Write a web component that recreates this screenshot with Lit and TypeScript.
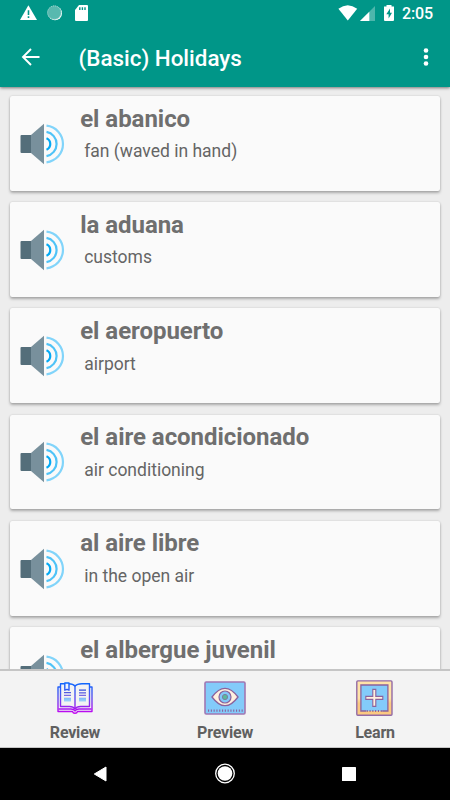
import { LitElement, html, css, nothing } from "lit";
import { customElement, property } from "lit/decorators.js";

const words: [string, string][] = [
  ["el abanico", "fan (waved in hand)"],
  ["la aduana", "customs"],
  ["el aeropuerto", "airport"],
  ["el aire acondicionado", "air conditioning"],
  ["al aire libre", "in the open air"],
  ["el albergue juvenil", ""],
];

@customElement("word-card")
class WordCard extends LitElement {
  @property() term = "";
  @property() meaning = "";

  static styles = css`
    :host {
      display: flex;
      align-items: center;
      box-sizing: border-box;
      height: 94.8px;
      flex: none;
      background: #fafafa;
      border-radius: 2px;
      box-shadow: 0 2px 3px rgba(0, 0, 0, 0.28), 0 0 2px rgba(0, 0, 0, 0.16);
    }
    .speaker { width: 46px; height: 42px; margin: 1px 0 0 9.7px; flex: none; }
    .words { align-self: flex-start; margin-left: 14.5px; padding-top: 7.6px; white-space: nowrap; }
    .term { font-size: 24px; line-height: 31px; font-weight: 700; color: #6f6f6f; letter-spacing: -0.04px; }
    .meaning { font-size: 17.5px; line-height: 22px; color: #656565; margin: 5.6px 0 0 4px; }
  `;

  render() {
    return html`
      <svg class="speaker" viewBox="0 0 46 42">
        <rect x=".5" y="12" width="13" height="18" rx="1" fill="#546e7a" />
        <path d="M11 12L24 .8V41.2L11 30Z" fill="#78909c" />
        <g fill="none" stroke-width="2.2">
          <path d="M26.5 15.3a6.2 6.2 0 0 1 0 11.4" stroke="#03a9f4" />
          <path d="M26.5 8.9a12.3 12.3 0 0 1 0 24.2" stroke="#4fc3f7" />
          <path d="M26.5 2.7a18.4 18.4 0 0 1 0 36.6" stroke="#81d4fa" />
        </g>
      </svg>
      <div class="words">
        <div class="term">${this.term}</div>
        ${this.meaning ? html`<div class="meaning">${this.meaning}</div>` : nothing}
      </div>
    `;
  }
}

const bookIcon = html`
  <svg class="icon" viewBox="0 0 38 38">
    <defs>
      <linearGradient id="ink" gradientUnits="userSpaceOnUse" x1="0" y1="3" x2="0" y2="35">
        <stop offset="0" stop-color="#0868ff" />
        <stop offset=".45" stop-color="#5553ee" />
        <stop offset="1" stop-color="#c800f0" />
      </linearGradient>
      <linearGradient id="lines" gradientUnits="userSpaceOnUse" x1="0" y1="10" x2="0" y2="23">
        <stop offset="0" stop-color="#2348d8" />
        <stop offset=".6" stop-color="#8a70e8" />
        <stop offset=".7" stop-color="#80bdf8" />
        <stop offset="1" stop-color="#a5d5fa" />
      </linearGradient>
    </defs>
    <g fill="none" stroke="url(#ink)" stroke-width="1.4" stroke-linejoin="round">
      <path d="M19 7C17 4.5 14 4.7 12 4.7H4.5V27.5H13.5C16 27.5 18 28.5 19 30C20 28.5 22 27.5 24.5 27.5H33.5V4.7H26C22 4.7 20.5 5.3 19 7Z" />
      <path d="M19 7V30M4.5 8H2V32.5H16.5Q17 34.2 19 34.2T21.5 32.5H36V8H33.5" />
      <path d="M2.5 30H15Q18 30 19 32Q20 30 23 30H35.5" />
      <path d="M8.8 4H13V11.2L11 10.3L8.8 11.2Z" fill="#eef4ff" />
    </g>
    <path d="M8 13H15V14.2H8ZM8 15.7H15V17H8ZM8 18.8H15V22.5H8ZM23 10.5H30V11.7H23ZM23 13.2H30V14.4H23ZM23 15.8H30V17H23ZM23 18.8H30V22.5H23Z" fill="url(#lines)" />
  </svg>
`;

const eyeIcon = html`
  <svg class="icon eye" viewBox="0 0 42 38">
    <rect x="1" y="3" width="40" height="32" rx="1.2" fill="#83cbfa" stroke="#a177b2" stroke-width="1.6" />
    <path d="M8 18Q14.5 9.3 21 9.3T34 18Q27.5 26.7 21 26.7T8 18Z" fill="#fff0df" stroke="#8b629c" stroke-width="1.3" />
    <circle cx="21" cy="18" r="6" fill="#83c8f8" stroke="#8b629c" stroke-width="1.2" />
    <circle cx="21" cy="18" r="2.6" fill="#5bb99a" stroke="#7e7ca2" stroke-width="1" />
    <path d="M4 31.7H39" stroke="#8b629c" stroke-width="2.2" stroke-dasharray="1.1 1.7" />
  </svg>
`;

const plusIcon = html`
  <svg class="icon" viewBox="0.8 0 38 38">
    <defs>
      <linearGradient id="frame" x1="0" y1="0" x2="0" y2="1">
        <stop offset=".5" stop-color="#ffe3a8" />
        <stop offset=".65" stop-color="#fbc981" />
      </linearGradient>
    </defs>
    <rect x="1.6" y="1.9" width="35.2" height="34.4" rx="1" fill="url(#frame)" stroke="#936aa5" stroke-width="1.4" />
    <rect x="5.7" y="6" width="27" height="26" fill="#83cbfa" />
    <path d="M11 32H5.7V6H32.7V32H27" fill="none" stroke="#8b629c" stroke-width="1.3" />
    <path d="M11.5 32H28" stroke="#8b629c" stroke-width="2.2" stroke-dasharray="1.1 1.7" />
    <path d="M17.6 10.4H20.6V17.4H27.6V20.4H20.6V27.4H17.6V20.4H10.6V17.4H17.6Z" fill="#fff0df" stroke="#8b629c" stroke-width="1.1" />
  </svg>
`;

@customElement("app-root")
class AppRoot extends LitElement {
  static styles = css`
    :host {
      display: flex;
      flex-direction: column;
      width: 450px;
      height: 800px;
      overflow: hidden;
      background: #ededed;
      font-family: Roboto, sans-serif;
    }
    svg { display: block; }
    header {
      flex: none;
      height: 87px;
      background: #009688;
      color: #fff;
      box-shadow: 0 1px 3px rgba(0, 0, 0, 0.5);
      z-index: 1;
    }
    .status { display: flex; align-items: center; height: 28px; padding: 0 17px 0 20px; }
    .left { width: 70px; height: 28px; }
    .right { width: 66px; height: 28px; margin-left: auto; }
    .clock { width: 31px; font-size: 16px; line-height: 20px; margin: -1px 0 0 1px; font-weight: 500; letter-spacing: -0.15px; white-space: nowrap; }
    .bar { display: flex; align-items: center; height: 59px; padding: 0 16px 0 20px; }
    .arrow { width: 22px; height: 59px; }
    .more { width: 16px; height: 59px; }
    h1 { margin: 0 0 0 36.5px; flex: 1; font-size: 22.4px; font-weight: 500; line-height: 30px; white-space: nowrap; }
    main {
      flex: 1;
      min-height: 0;
      overflow: hidden;
      display: flex;
      flex-direction: column;
      gap: 11.4px;
      padding: 9px 10px 0;
    }
    .tabs {
      flex: none;
      height: 79.5px;
      box-sizing: border-box;
      display: grid;
      grid-template-columns: repeat(3, 1fr);
      justify-items: center;
      border-top: 2px solid #c5c5c5;
      border-bottom: 1px solid #c5c5c5;
      background: #f3f3f3;
    }
    .tab { display: flex; flex-direction: column; align-items: center; padding-top: 8.5px; }
    .icon { width: 38px; height: 38px; }
    .eye { width: 42px; }
    .label { font-size: 16px; line-height: 20px; font-weight: 700; color: #606060; margin-top: 5.5px; letter-spacing: -0.2px; }
    .system { flex: none; height: 52px; background: #000; }
  `;

  render() {
    return html`
      <header>
        <div class="status">
          <svg class="left" viewBox="0 0 70 28">
            <path d="M8.4 5.2L17 20H0Z" fill="#fff" />
            <path d="M8.5 10.2V15M8.5 16.2V18" stroke="#009688" stroke-width="1.6" />
            <circle cx="35" cy="13.3" r="7" fill="#fff" />
            <circle cx="34.3" cy="12.6" r="7" fill="#58b9af" />
            <circle cx="34.3" cy="12.6" r="6.7" fill="none" stroke="#a6dad5" stroke-dasharray="1 1" />
            <path d="M59 5H67Q68 5 68 6V20Q68 21 67 21H56Q55 21 55 20V10Z" fill="#fff" />
            <path d="M59.8 7.2V10M62.4 7.2V10M65 7.2V10" stroke="#009688" stroke-width="1.4" />
          </svg>
          <svg class="right" viewBox="335 0 66 28">
            <path d="M338.4 8.8Q347.7 1.6 357.2 8.8L347.8 20.6Z" fill="#fff" />
            <path d="M375 6V21H360Z" fill="#4db6ac" />
            <path d="M369.3 11.7V21H360Z" fill="#fff" />
            <path d="M386.5 5H391.5V6.5H394V20Q394 21 393 21H385Q384 21 384 20V6.5H386.5Z" fill="#fff" />
            <path d="M390 8.5L386.3 14.2H388.6V18.5L392 12.8H390Z" fill="#009688" />
          </svg>
          <span class="clock">2:05</span>
        </div>
        <div class="bar">
          <svg class="arrow" viewBox="20 28 22 59">
            <path d="M39.5 57H23.2M31 49L23 57L31 65" fill="none" stroke="#fff" stroke-width="1.9" />
          </svg>
          <h1>(Basic) Holidays</h1>
          <svg class="more" viewBox="418 28 16 59" fill="#fff">
            <circle cx="426" cy="50.5" r="2.3" />
            <circle cx="426" cy="57" r="2.3" />
            <circle cx="426" cy="63.5" r="2.3" />
          </svg>
        </div>
      </header>
      <main>
        ${words.map(([term, meaning]) => html`<word-card .term=${term} .meaning=${meaning}></word-card>`)}
      </main>
      <nav class="tabs">
        <div class="tab">${bookIcon}<span class="label">Review</span></div>
        <div class="tab">${eyeIcon}<span class="label">Preview</span></div>
        <div class="tab">${plusIcon}<span class="label">Learn</span></div>
      </nav>
      <svg class="system" viewBox="0 748 450 52">
        <path d="M94.3 774L106 767V781Z" fill="#fff" stroke="#fff" stroke-width="1" stroke-linejoin="round" />
        <circle cx="225" cy="773.5" r="9.3" fill="none" stroke="#fff" stroke-width="1.3" />
        <circle cx="225" cy="773.5" r="7.3" fill="#fff" />
        <rect x="342" y="767" width="14" height="14" rx=".6" fill="#fff" />
      </svg>
    `;
  }
}
